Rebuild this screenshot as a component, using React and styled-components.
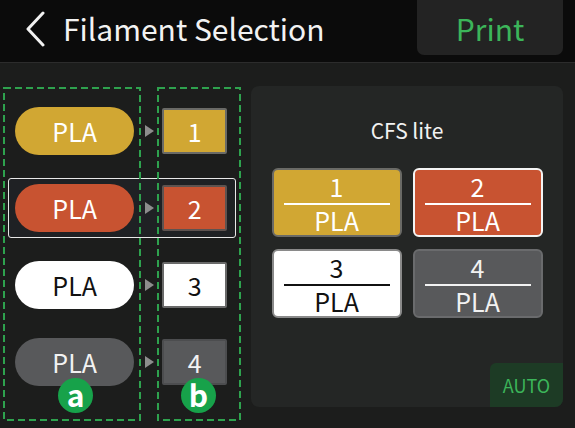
import React from 'react';
import styled, { createGlobalStyle } from 'styled-components';

const GlobalStyle = createGlobalStyle`
  html, body {
    margin: 0;
    padding: 0;
    background: #1c1d1c;
    font-family: "Noto Sans CJK SC", "Noto Sans", sans-serif;
  }
  * { box-sizing: border-box; }
`;

const Screen = styled.div`
  width: 575px;
  height: 428px;
  display: flex;
  flex-direction: column;
  background: #1c1d1c;
  overflow: hidden;
`;

const Header = styled.div`
  height: 63px;
  flex: none;
  display: flex;
  align-items: flex-start;
  background: #0b0b0b;
  border-bottom: 1px solid #2c2c2c;
  padding-left: 25px;
  padding-right: 12px;
`;

const BackButton = styled.div`
  width: 22px;
  height: 58px;
  display: flex;
  align-items: center;
`;

const Title = styled.h1`
  margin: 0 0 0 16px;
  height: 56px;
  line-height: 56px;
  font-size: 30px;
  font-weight: 400;
  color: #f2f2f2;
  flex: 1;
`;

const PrintButton = styled.div`
  width: 146px;
  height: 55px;
  border-radius: 0 0 7px 7px;
  background: #232323;
  color: #3cb55a;
  font-size: 30px;
  display: flex;
  align-items: center;
  justify-content: center;
`;

const Body = styled.div`
  flex: 1;
  display: flex;
  padding: 0 12px 21px 8px;
`;

const Mapping = styled.div`
  position: relative;
  width: 243px;
  display: flex;
  flex-direction: column;
  gap: 17px;
  padding-top: 38px;
`;

const Row = styled.div`
  height: 60px;
  width: 228px;
  display: flex;
  align-items: center;
  padding: 0 8px 0 7px;
  border: 1.5px solid ${p => (p.$selected ? '#e8e8e8' : 'transparent')};
  border-radius: 3px;
  background: ${p => (p.$selected ? '#1f2124' : 'transparent')};
`;

const Pill = styled.div`
  width: 120px;
  height: 48px;
  border-radius: 24px;
  background: ${p => p.$bg};
  color: ${p => p.$fg};
  font-size: 25px;
  display: flex;
  align-items: center;
  justify-content: center;
  margin-left: -1px;
`;

const Arrow = styled.div`
  width: 0;
  height: 0;
  margin: 0 8px 0 11px;
  border-top: 6px solid transparent;
  border-bottom: 6px solid transparent;
  border-left: 9px solid #8d8d8d;
`;

const Slot = styled.div`
  width: 65px;
  height: 46px;
  border: 2px solid ${p => p.$border};
  border-radius: 2px;
  background: ${p => p.$bg};
  color: ${p => p.$fg};
  font-size: 25px;
  display: flex;
  align-items: center;
  justify-content: center;
`;

const DashedBox = styled.svg`
  position: absolute;
  top: 24px;
  left: ${p => p.$left}px;
  pointer-events: none;
  overflow: visible;
`;

const Badge = styled.div`
  position: absolute;
  top: 315px;
  left: ${p => p.$left}px;
  width: 35px;
  height: 35px;
  border-radius: 50%;
  background: #17a24a;
  color: #ffffff;
  font-size: 30px;
  font-weight: 700;
  line-height: 32px;
  text-align: center;
`;

const Panel = styled.div`
  flex: 1;
  margin-top: 23px;
  border-radius: 8px;
  background: #242625;
  display: flex;
  flex-direction: column;
  align-items: center;
`;

const PanelTitle = styled.div`
  margin-top: 30px;
  height: 28px;
  line-height: 28px;
  font-size: 21px;
  color: #f2f2f2;
`;

const CardGrid = styled.div`
  margin-top: 24px;
  display: grid;
  grid-template-columns: 130px 130px;
  grid-auto-rows: 69px;
  column-gap: 11px;
  row-gap: 12px;
`;

const Card = styled.div`
  border-radius: 6px;
  border: 2px solid ${p => p.$border};
  background: ${p => p.$bg};
  color: ${p => p.$fg};
  display: flex;
  flex-direction: column;
  align-items: center;
  padding-top: 1px;
`;

const CardNumber = styled.div`
  font-size: 25px;
  line-height: 30px;
  height: 30px;
`;

const CardLine = styled.div`
  width: 106px;
  height: 2px;
  margin-top: 2px;
  background: ${p => p.$fg};
`;

const CardMaterial = styled.div`
  font-size: 25px;
  line-height: 30px;
`;

const AutoButton = styled.div`
  margin-top: auto;
  align-self: flex-end;
  width: 73px;
  height: 44px;
  border-radius: 6px 0 8px 0;
  background: #1d3b25;
  color: #3cb55a;
  font-size: 18px;
  display: flex;
  align-items: center;
  justify-content: center;
`;

const filaments = [
  { id: 1, bg: '#d1a733', fg: '#ffffff', border: '#6a6a66', card: '#6a6a66' },
  { id: 2, bg: '#c85331', fg: '#ffffff', border: '#5e5350', card: '#f4f4f4' },
  { id: 3, bg: '#ffffff', fg: '#111111', border: '#6a6a6a', card: '#8a8a8a' },
  { id: 4, bg: '#58595b', fg: '#f2f2f2', border: '#4c4d4f', card: '#6a6b6d' },
];

function Dashed({ left, width }) {
  return (
    <DashedBox $left={left} width={width} height={334}>
      <rect x="1" y="1" width={width - 2} height={332} fill="none" stroke="#2ea24e" strokeWidth="2" strokeDasharray="7 4" />
    </DashedBox>
  );
}

function App() {
  return (
    <Screen>
      <GlobalStyle />
      <Header>
        <BackButton>
          <svg width="22" height="36" viewBox="0 0 22 36">
            <path d="M18 2 L3 18 L18 34" fill="none" stroke="#f2f2f2" strokeWidth="3" strokeLinecap="round" strokeLinejoin="round" />
          </svg>
        </BackButton>
        <Title>Filament Selection</Title>
        <PrintButton>Print</PrintButton>
      </Header>
      <Body>
        <Mapping>
          {filaments.map(f => (
            <Row key={f.id} $selected={f.id === 2}>
              <Pill $bg={f.bg} $fg={f.fg}>PLA</Pill>
              <Arrow />
              <Slot $bg={f.bg} $fg={f.fg} $border={f.border}>{f.id}</Slot>
            </Row>
          ))}
          <Dashed left={-5} width={138} />
          <Dashed left={149} width={84} />
          <Badge $left={50}>a</Badge>
          <Badge $left={173}>b</Badge>
        </Mapping>
        <Panel>
          <PanelTitle>CFS lite</PanelTitle>
          <CardGrid>
            {filaments.map(f => (
              <Card key={f.id} $bg={f.bg} $fg={f.fg} $border={f.card}>
                <CardNumber>{f.id}</CardNumber>
                <CardLine $fg={f.fg} />
                <CardMaterial>PLA</CardMaterial>
              </Card>
            ))}
          </CardGrid>
          <AutoButton>AUTO</AutoButton>
        </Panel>
      </Body>
    </Screen>
  );
}

export default App;
